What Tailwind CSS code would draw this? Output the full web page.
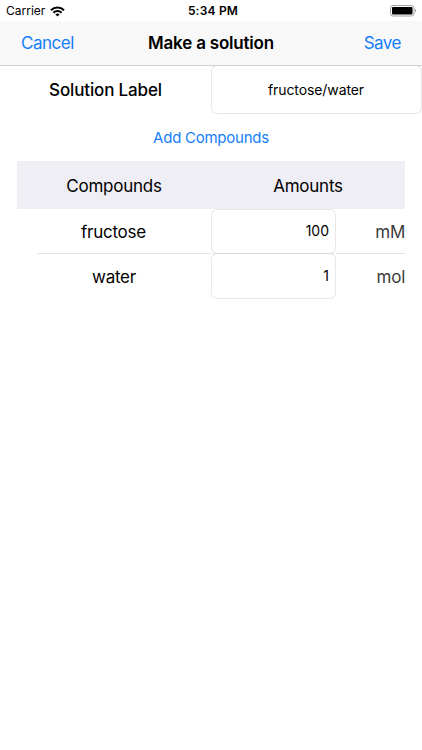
<!DOCTYPE html>
<html lang="en">
<head>
<meta charset="utf-8">
<title>Make a solution</title>
<script src="https://cdn.jsdelivr.net/npm/@tailwindcss/browser@4"></script>
</head>
<body class="h-[750px] w-[422px] overflow-hidden bg-white font-['Inter','Liberation_Sans',sans-serif] text-[17px] leading-6 tracking-[-0.25px] whitespace-nowrap text-black">
  <div class="grid h-[21px] grid-cols-3 items-center bg-white pt-px pr-[5px] pl-[6px] text-[12px] leading-5">
    <div class="flex items-center gap-[5px]">
      <span class="tracking-normal">Carrier</span>
      <svg class="h-[11px] w-[15px]" viewBox="0 0 15 11" fill="none" stroke="#000" stroke-width="2"><path d="M1 4.2C4.6.5 10.400.5 14 4.200M3.400 6.800c2.300-2.300 5.900-2.300 8.200 0"/><path d="M7.500 10.500 5.300 8.300c1.200-1.100 3.200-1.100 4.400 0Z" fill="#000" stroke="none"/></svg>
    </div>
    <span class="pl-[3px] text-center font-semibold tracking-[0.2px]">5:34 PM</span>
    <svg class="h-[12px] w-[27px] justify-self-end" viewBox="0 0 27 12"><rect x=".5" y=".5" width="23.500" height="10.500" rx="2.500" fill="#fff" stroke="#a3a3a3"/><rect x="2" y="2" width="20.500" height="7.500" rx="1" fill="#000"/><path d="M25 4c1.700.5 1.700 3 0 3.500Z" fill="#a3a3a3"/></svg>
  </div>
  <header class="grid h-[45px] grid-cols-[1fr_auto_1fr] items-center border-b border-[#d2d2d3] bg-[#f8f8f8] px-[21px]">
    <button class="text-left tracking-[-0.5px] text-[#147efb]">Cancel</button>
    <h1 class="font-semibold tracking-[-0.2px]">Make a solution</h1>
    <button class="text-right tracking-[-0.5px] text-[#147efb]">Save</button>
  </header>
  <main>
    <div class="-mt-px grid h-[49px] grid-cols-2">
      <label class="flex items-center justify-center font-medium tracking-[-0.15px]">Solution Label</label>
      <div class="flex items-center justify-center rounded-[6px] border border-[#e8e8e8] border-t-[#d2d2d3] pr-px text-[14px] tracking-[-0.1px]">fructose/water</div>
    </div>
    <div class="flex h-[47px] items-center justify-center text-[15px] text-[#147efb]">Add Compounds</div>
    <section class="mr-[17px] ml-4">
      <div class="ml-px grid h-[48px] grid-cols-2 items-center bg-[#efeef5] pt-px text-center">
        <span>Compounds</span>
        <span>Amounts</span>
      </div>
      <div class="flex h-[45px] items-center">
        <div class="ml-[21px] flex h-full w-[174px] items-center border-b border-[#e2e2e3] pt-px pl-[44px]">fructose</div>
        <div class="flex h-full w-[125px] items-center justify-end rounded-[6px] border border-[#e8e8e8] border-b-[#d9d9da] pr-[6px] pb-px text-[14px] tracking-normal">100</div>
        <div class="flex h-full flex-1 items-center justify-end border-b border-[#e2e2e3] pt-px text-[#3c3c3c]">mM</div>
      </div>
      <div class="-mt-px flex h-[46px] items-center">
        <div class="ml-[21px] flex h-full w-[174px] items-center pt-0.5 pl-[55px]">water</div>
        <div class="flex h-full w-[125px] items-center justify-end rounded-[6px] border border-[#e8e8e8] border-t-[#d9d9da] pr-[6px] text-[14px] tracking-normal">1</div>
        <div class="flex h-full flex-1 items-center justify-end pt-0.5 text-[#3c3c3c]">mol</div>
      </div>
    </section>
  </main>
</body>
</html>
